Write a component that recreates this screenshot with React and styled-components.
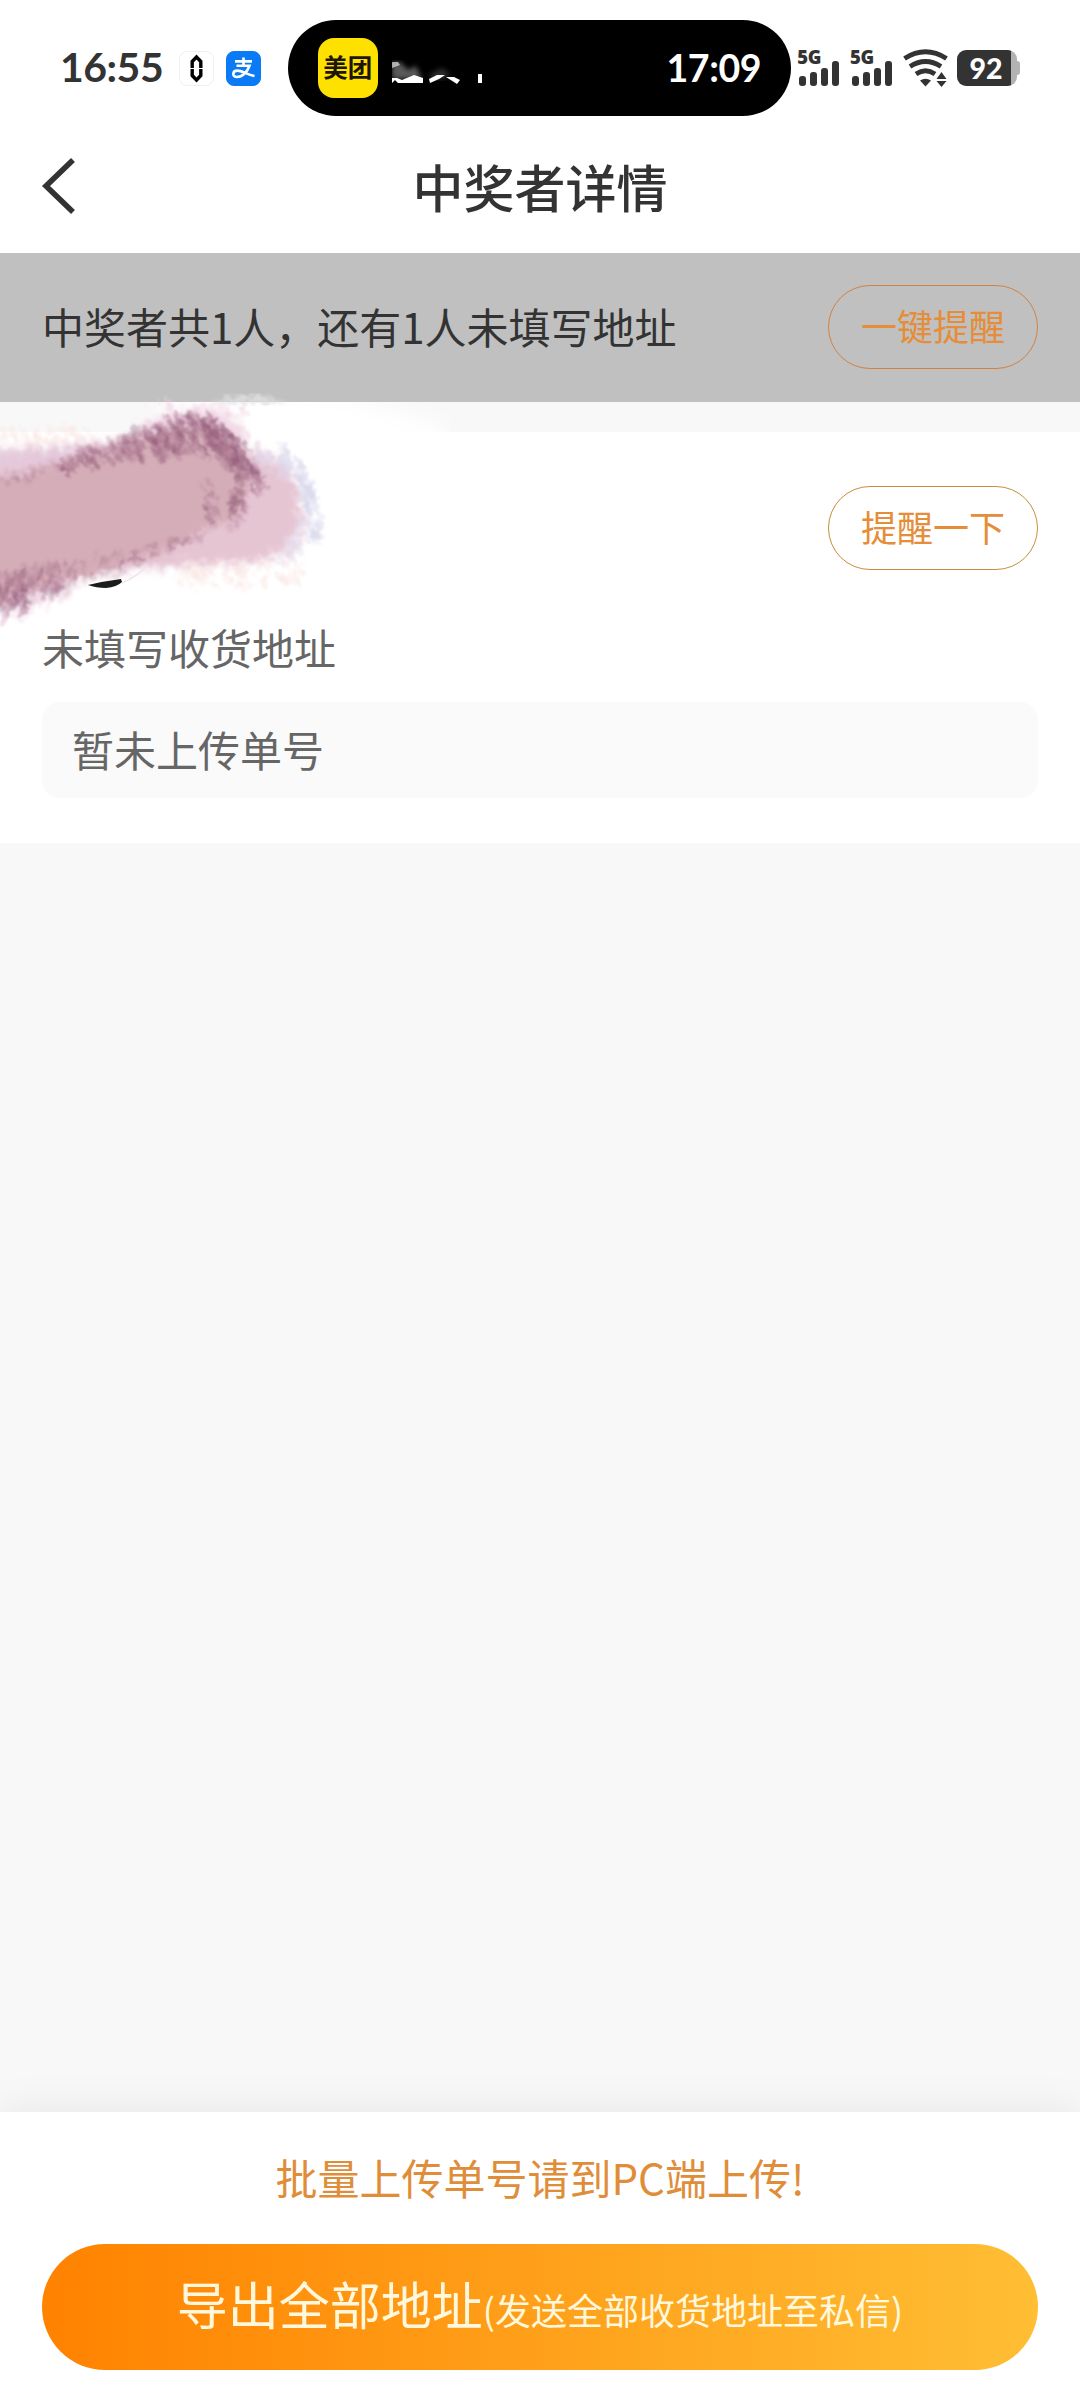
import React from "react";
import styled, { createGlobalStyle } from "styled-components";

const GlobalStyle = createGlobalStyle`
  *, *::before, *::after { box-sizing: border-box; }
  body {
    margin: 0;
    background: #f8f8f8;
    color: #333;
    font-family: "Noto Sans CJK SC", sans-serif;
  }
`;

const Page = styled.div`
  display: flex;
  flex-direction: column;
  width: 1080px;
  height: 2400px;
  overflow: hidden;
  background: #f8f8f8;
`;

const StatusBar = styled.header`
  display: flex;
  align-items: flex-start;
  height: 136px;
  padding: 20px 60px 0 60px;
  background: #fff;
  font-family: Lato, "Noto Sans CJK SC", sans-serif;
`;

const Clock = styled.span`
  width: 119px;
  margin-top: 22px;
  font-size: 41px;
  line-height: 50px;
  font-weight: 700;
  letter-spacing: -0.5px;
  white-space: nowrap;
  color: #333;
`;

const AppBadge = styled.span`
  display: flex;
  align-items: center;
  justify-content: center;
  width: 35px;
  height: 35px;
  margin-top: 31px;
  margin-right: ${(p) => p.$gap}px;
  border-radius: 8px;
  border: 1px solid ${(p) => p.$border};
  background: ${(p) => p.$bg};
`;

const Island = styled.div`
  display: flex;
  align-items: center;
  width: 504px;
  height: 96px;
  padding: 0 30px 0 30px;
  border-radius: 48px;
  background: #000;
`;

const MeituanLogo = styled.span`
  display: flex;
  align-items: center;
  justify-content: center;
  width: 60px;
  height: 60px;
  padding-bottom: 2px;
  border-radius: 16px;
  background: #ffe100;
  color: #1c1600;
  font: 700 24.5px/24px "Noto Sans CJK SC", sans-serif;
`;

const IslandTime = styled.span`
  margin-left: auto;
  color: #fff;
  font-size: 37.5px;
  line-height: 46px;
  font-weight: 700;
  letter-spacing: -0.4px;
`;

const Signal = styled.div`
  display: flex;
  flex-direction: column;
  width: 53px;
  height: 36px;
  margin-top: 30px;
  margin-left: ${(p) => p.$lead || 0}px;
`;

const Network = styled.span`
  height: 11px;
  font-family: "Open Sans", sans-serif;
  font-size: 18.5px;
  line-height: 14px;
  font-weight: 800;
  letter-spacing: -0.3px;
  color: #333;
`;

const Bars = styled.div`
  display: flex;
  align-items: flex-end;
  gap: 4.5px;
  height: 25px;
  padding-left: 2px;
`;

const Bar = styled.i`
  width: 6.5px;
  height: ${(p) => p.$h}px;
  border-radius: 3px;
  background: #333;
`;

const WifiIcon = styled.svg`
  flex: none;
  width: 46px;
  height: 38px;
  margin-top: 29px;
`;

const Battery = styled.div`
  display: flex;
  align-items: center;
  flex: none;
  margin: 30px 0 0 8px;
`;

const BatteryBody = styled.span`
  display: flex;
  align-items: center;
  justify-content: center;
  width: 60px;
  height: 36px;
  padding-right: 2px;
  border-radius: 9px;
  background: linear-gradient(90deg, #333 54px, #b3b3b3 54px);
  color: #fff;
  font-size: 28.5px;
  line-height: 36px;
  font-weight: 900;
`;

const BatteryTip = styled.span`
  width: 3px;
  height: 14px;
  border-radius: 0 3px 3px 0;
  background: #b3b3b3;
`;

const NavBar = styled.nav`
  display: grid;
  grid-template-columns: 90px 1fr 90px;
  align-items: center;
  height: 117px;
  padding: 0 0 17px;
  background: #fff;
`;

const BackIcon = styled.svg`
  width: 36px;
  height: 58px;
  margin: 0 0 0 41px;
`;

const Title = styled.h1`
  margin: 0;
  text-align: center;
  font-size: 51px;
  line-height: 74px;
  font-weight: 500;
`;

const Banner = styled.section`
  display: flex;
  align-items: center;
  justify-content: space-between;
  height: 149px;
  padding: 0 42px 1px;
  background: #c0c0c0;
  font-size: 42px;
  line-height: 60px;
`;

const BannerText = styled.span`
  padding-bottom: 2px;
`;

const OutlineButton = styled.button`
  width: 210px;
  height: 84px;
  margin: 0;
  padding: 0 0 4px;
  border: 1px solid ${(p) => p.$line};
  border-radius: 42px;
  background: transparent;
  color: #e58d38;
  font: 400 36px/52px "Noto Sans CJK SC", sans-serif;
`;

const WinnerCard = styled.section`
  position: relative;
  display: flex;
  flex-direction: column;
  height: 411px;
  margin-top: 30px;
  padding: 54px 42px 0;
  background: #fff;
  color: #666;
  font-size: 42px;
  line-height: 60px;
`;

const WinnerRow = styled.div`
  display: flex;
  justify-content: flex-end;
  height: 84px;
`;

const Address = styled.p`
  margin: 47px 0 25px;
`;

const TrackingBox = styled.div`
  display: flex;
  align-items: center;
  height: 96px;
  padding: 0 30px 2px;
  border-radius: 18px;
  background: #fafafa;
`;

const PaintOverlay = styled.svg`
  position: absolute;
  left: 0;
  top: -62px;
  width: 450px;
  height: 270px;
  pointer-events: none;
`;

const Footer = styled.footer`
  display: flex;
  flex-direction: column;
  align-items: center;
  height: 288px;
  margin-top: auto;
  padding: 35px 42px 0;
  background: #fff;
  box-shadow: 0 0 42px rgba(0, 0, 0, 0.08);
`;

const Notice = styled.p`
  margin: 0 0 37px;
  color: #e08d3a;
  font-size: 42px;
  line-height: 60px;
`;

const ExportButton = styled.button`
  width: 100%;
  height: 126px;
  padding: 0 0 2px;
  border: 0;
  border-radius: 63px;
  background: linear-gradient(90deg, #ff8200, #ffbe34);
  color: #fff8dc;
  font: 400 51px/74px "Noto Sans CJK SC", sans-serif;
  white-space: nowrap;
`;

const ExportNote = styled.span`
  font-size: 36px;
`;

const SmudgedIcon = styled.svg`
  flex: none;
  margin-left: 14px;
`;

const SmudgedLabel = () => (
  <SmudgedIcon width="96" height="36" viewBox="0 0 96 36">
    <defs>
      <filter id="soft"><feGaussianBlur stdDeviation="0.7" /></filter>
      <filter id="haze"><feGaussianBlur stdDeviation="2.6" /></filter>
    </defs>
    <g filter="url(#haze)" fill="#5a5a5a">
      <path d="M0 12l8 0 8 8 8-4 6 13H0z" />
      <path d="M38 24l12-6 8 6-6 5H38z" opacity=".5" />
    </g>
    <g filter="url(#soft)" fill="#fff">
      <path d="M0 12l6 0 2 3-8 3z" opacity=".6" />
      <path d="M0 28l5 0 5 2 12-5 9 3v5H6l-3-3-3 3z" />
      <path d="M37 29l8-4 8 0-6 4-9 4z" />
      <path d="M54 27l8 0 6 3-3 4z" />
      <path d="M86 24h4v9h-4z" />
    </g>
  </SmudgedIcon>
);

const SignalMeter = ({ lead }) => (
  <Signal $lead={lead}>
    <Network>5G</Network>
    <Bars>
      {[10, 14, 18, 25].map((h) => <Bar key={h} $h={h} />)}
    </Bars>
  </Signal>
);

const BODY = "M-20 482L18 474L52 466L82 456L105 450L132 441L165 430L190 426L212 428L228 442L243 461L254 478L246 491L244 508L232 520L212 526L188 541L156 553L120 567L85 577L52 584L20 592L-20 610Z";

// Bristle bands: start, end, spread across the band, mark count, opacity, mark direction
const BANDS = [
  { a: [-4, 480], b: [80, 458], spread: 14, n: 30, o: 0.14, d: [4, 4] },
  { a: [60, 462], b: [130, 442], spread: 20, n: 60, o: 0.22, d: [5, 6] },
  { a: [120, 444], b: [175, 436], spread: 30, n: 80, o: 0.26, d: [5, 8] },
  { a: [165, 430], b: [215, 432], spread: 38, n: 96, o: 0.27, d: [5, 9] },
  { a: [205, 424], b: [240, 454], spread: 26, n: 70, o: 0.27, d: [5, 8] },
  { a: [222, 448], b: [256, 480], spread: 24, n: 64, o: 0.27, d: [5, 8] },
  { a: [234, 492], b: [236, 516], spread: 26, n: 42, o: 0.25, d: [3, 5] },
  { a: [205, 488], b: [216, 528], spread: 20, n: 26, o: 0.18, d: [3, 4] },
  { a: [110, 566], b: [195, 534], spread: 14, n: 34, o: 0.2, d: [4, 2] },
  { a: [40, 572], b: [125, 560], spread: 28, n: 60, o: 0.14, d: [-1, 6] },
  { a: [-4, 586], b: [60, 576], spread: 34, n: 90, o: 0.2, d: [-2, 10] },
  { a: [-4, 598], b: [28, 590], spread: 24, n: 36, o: 0.24, d: [-3, 12] },
];

const makeRandom = (seed) => () => {
  seed = (seed * 16807) % 2147483647;
  return seed / 2147483647;
};

const scatter = (bands, seed) => {
  const rnd = makeRandom(seed);
  return bands.flatMap(({ a, b, spread, n, o, d, c }) =>
    Array.from({ length: n }, () => {
      const t = rnd();
      const x = a[0] + (b[0] - a[0]) * t + (rnd() - 0.5) * spread * 0.6;
      const y = a[1] + (b[1] - a[1]) * t + (rnd() - 0.5) * spread;
      const k = 0.3 + rnd() * 0.9;
      return {
        d: `M${x.toFixed(1)} ${y.toFixed(1)}l${(d[0] * k).toFixed(1)} ${(d[1] * k).toFixed(1)}`,
        w: 2.4 + rnd() * 3.2,
        o: o * (0.5 + rnd() * 0.8),
        c,
      };
    })
  );
};

const DARK_MARKS = scatter(BANDS, 4217);

const PALE_MARKS = scatter([
  { a: [150, 412], b: [245, 420], spread: 28, n: 44, o: 0.35, d: [5, 10], c: "#f0cfe0" },
  { a: [252, 447], b: [284, 466], spread: 18, n: 36, o: 0.4, d: [4, 8], c: "#e2d3e6" },
  { a: [280, 450], b: [312, 490], spread: 20, n: 54, o: 0.35, d: [4, 9], c: "#d9d8ec" },
  { a: [303, 478], b: [316, 534], spread: 22, n: 54, o: 0.35, d: [3, 9], c: "#d8d9ec" },
  { a: [282, 555], b: [304, 520], spread: 24, n: 36, o: 0.4, d: [3, 7], c: "#e4dbec" },
  { a: [180, 574], b: [300, 568], spread: 26, n: 80, o: 0.45, d: [4, 5], c: "#fae8e4" },
  { a: [-4, 436], b: [90, 434], spread: 18, n: 50, o: 0.4, d: [4, 5], c: "#fae6e3" },
  { a: [-4, 606], b: [70, 584], spread: 30, n: 60, o: 0.32, d: [-4, 12], c: "#ecc9de" },
], 991);

const Marks = ({ items, color }) =>
  items.map((m, i) => (
    <path key={i} d={m.d} stroke={m.c || color} strokeWidth={m.w} strokeLinecap="round" opacity={m.o} />
  ));

const Paint = () => (
  <PaintOverlay viewBox="0 370 450 270">
    <defs>
      <filter id="rough" x="-20%" y="-20%" width="140%" height="140%">
        <feGaussianBlur in="SourceGraphic" stdDeviation="2.5" result="b" />
        <feTurbulence type="fractalNoise" baseFrequency="0.16" numOctaves="2" seed="7" result="n" />
        <feDisplacementMap in="b" in2="n" scale="18" xChannelSelector="R" yChannelSelector="G" />
        <feGaussianBlur stdDeviation="1.2" />
      </filter>
      <filter id="wash" x="-20%" y="-20%" width="140%" height="140%">
        <feGaussianBlur in="SourceGraphic" stdDeviation="5" result="b" />
        <feTurbulence type="fractalNoise" baseFrequency="0.12" numOctaves="2" seed="3" result="n" />
        <feDisplacementMap in="b" in2="n" scale="18" xChannelSelector="R" yChannelSelector="G" />
        <feGaussianBlur stdDeviation="1.2" />
      </filter>
      <filter id="bristle" x="-10%" y="-10%" width="120%" height="120%">
        <feTurbulence type="fractalNoise" baseFrequency="0.2" numOctaves="2" seed="11" result="n" />
        <feDisplacementMap in="SourceGraphic" in2="n" scale="9" xChannelSelector="R" yChannelSelector="G" />
        <feGaussianBlur stdDeviation="1.1" />
      </filter>
      <filter id="fade" x="-20%" y="-60%" width="140%" height="220%">
        <feGaussianBlur stdDeviation="10" />
      </filter>
      <clipPath id="strip"><rect x="0" y="402" width="450" height="60" /></clipPath>
    </defs>

    <g clipPath="url(#strip)">
      <path d="M130 446L175 400L205 386L330 394L400 412L450 430L450 450Z" fill="#fff" filter="url(#fade)" />
    </g>
    <path d="M212 404L226 398L252 395L272 399L290 404Z" fill="#e0e0e0" filter="url(#rough)" />

    <g filter="url(#wash)">
      <path d="M130 436L152 420L172 412L212 409L234 416L246 436L250 470L130 470Z" fill="#f3dae6" />
      <path d="M-20 450L60 446L130 440L220 440L262 456L288 466L300 492L303 530L288 552L256 563L205 566L150 568L90 574L50 588L10 604L-20 612Z" fill="#e6c5d3" />
      <path d="M-20 450L30 450L82 446L70 458L-20 474Z" fill="#e4c9dc" />
    </g>
    <g filter="url(#bristle)">
      <Marks items={PALE_MARKS} />
    </g>

    <path d={BODY} fill="#d5adb8" filter="url(#rough)" />
    <g filter="url(#bristle)">
      <Marks items={DARK_MARKS} color="#8f5675" />
    </g>

    <path d="M88 585Q105 581 121 579L122 582Q117 587 106 588Q96 588 88 585Z" fill="#1b1b1b" filter="url(#soft)" />
    <path d="M122 583Q138 576 148 565" fill="none" stroke="#eee3e8" strokeWidth="1.2" />
  </PaintOverlay>
);

export default function App() {
  return (
    <>
      <GlobalStyle />
      <Page>
        <StatusBar>
          <Clock>16:55</Clock>
          <AppBadge $bg="#fff" $border="#f0f0f0" $gap={12}>
            <svg width="13" height="29" viewBox="0 0 13 29" fill="none" stroke="#000" strokeWidth="3.4">
              <path d="M2.2 14V7.5L6.5 3L10.8 7.5V14M2.2 15V21.5L6.5 26L10.8 21.5V15" />
            </svg>
          </AppBadge>
          <AppBadge $bg="#0a7bf5" $border="#0a7bf5" $gap={27}>
            <svg width="27" height="27" viewBox="0 0 27 27" fill="none" stroke="#fff" strokeWidth="2.6">
              <path d="M5 6.4H22M13.5 2.5V10.8M6.5 10.8H19.5C17.5 16.4 12.5 22 7 22C1.8 22 2.2 15.6 7.4 15.6C12 15.6 17 19.6 24.5 21" />
            </svg>
          </AppBadge>
          <Island>
            <MeituanLogo>美团</MeituanLogo>
            <SmudgedLabel />
            <IslandTime>17:09</IslandTime>
          </Island>
          <SignalMeter lead={6} />
          <SignalMeter />
          <WifiIcon viewBox="0 0 46 38" fill="none" stroke="#333" strokeWidth="4.8">
            <path d="M1.5 9.5Q22.5-4 43.5 9.5" />
            <path d="M7 17.5Q22.5 7.5 38 17.5" />
            <path d="M13 25Q22.5 18.5 32 25" />
            <path d="M17 31.5Q22.5 28 28 31.5L22.5 37.5Z" fill="#333" stroke="none" />
            <path d="M33.5 30L38.5 23L43.5 30ZM33.5 32H43.5L38.5 38Z" fill="#333" stroke="none" />
          </WifiIcon>
          <Battery>
            <BatteryBody>92</BatteryBody>
            <BatteryTip />
          </Battery>
        </StatusBar>
        <NavBar>
          <BackIcon viewBox="0 0 36 58" fill="none" stroke="#333" strokeWidth="5.6">
            <path d="M32 3L5 29L32 55" />
          </BackIcon>
          <Title>中奖者详情</Title>
        </NavBar>
        <Banner>
          <BannerText>中奖者共1人，还有1人未填写地址</BannerText>
          <OutlineButton $line="#d4813f">一键提醒</OutlineButton>
        </Banner>
        <WinnerCard>
          <WinnerRow>
            <OutlineButton $line="#c98d3c">提醒一下</OutlineButton>
          </WinnerRow>
          <Address>未填写收货地址</Address>
          <TrackingBox>暂未上传单号</TrackingBox>
          <Paint />
        </WinnerCard>
        <Footer>
          <Notice>批量上传单号请到PC端上传!</Notice>
          <ExportButton>
            导出全部地址<ExportNote>(发送全部收货地址至私信)</ExportNote>
          </ExportButton>
        </Footer>
      </Page>
    </>
  );
}
